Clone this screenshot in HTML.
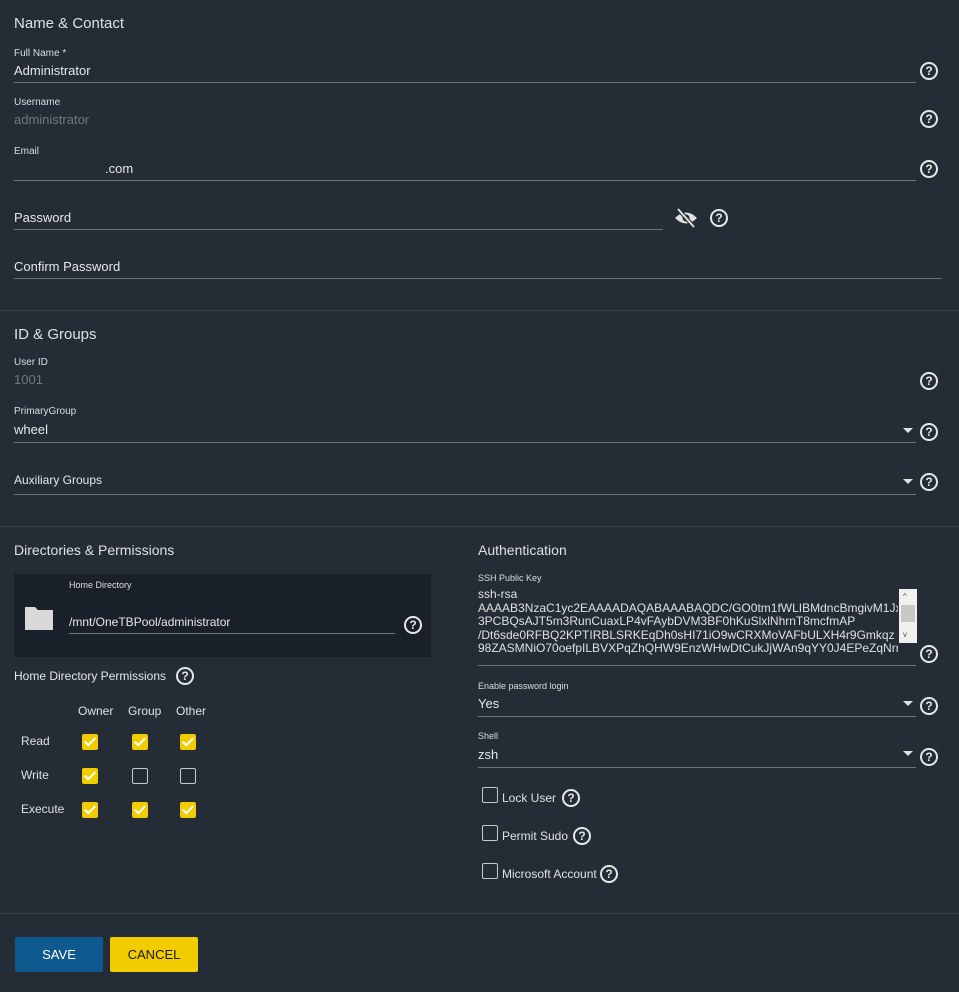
<!DOCTYPE html>
<html><head><meta charset="utf-8"><style>
body{margin:0;width:959px;height:992px;background:#242d36;font-family:"Liberation Sans",sans-serif;color:#e6e6e6;position:relative;overflow:hidden}
.a{position:absolute;white-space:nowrap}
.t{font-size:15px;color:#e0e0e0}
.lb{font-size:10px;color:#dcdcdc}
.v{font-size:13px;color:#e6e6e6}
.dim{color:#6f7780}
.ln{position:absolute;height:1px;background:#6b737b}
.sep{position:absolute;left:0;width:959px;height:1px;background:#36404a}
.h{position:absolute;width:14px;height:14px;border:2px solid #e6e6e6;border-radius:50%;font-size:12px;font-weight:bold;line-height:14px;text-align:center;color:#e6e6e6}
.arr{position:absolute;width:0;height:0;border-left:5px solid transparent;border-right:5px solid transparent;border-top:5px solid #e0e0e0}
.cb{position:absolute;width:14px;height:14px;border:1px solid #c8c8c8;border-radius:2px}
.ck{position:absolute;width:16px;height:16px;background:#f0cc00;border-radius:2px}
.ck:after{content:"";position:absolute;left:5px;top:1px;width:4px;height:9px;border:solid #fff;border-width:0 2px 2px 0;transform:rotate(45deg)}
.sm{font-size:12px;color:#e0e0e0}
</style></head><body>
<div class="a t" style="left:14px;top:15px">Name &amp; Contact</div>
<div class="a lb" style="left:14px;top:48px">Full Name *</div>
<div class="a v" style="left:14px;top:63px">Administrator</div>
<div class="ln" style="left:14px;top:82px;width:902px"></div>
<div class="h" style="left:920px;top:62px">?</div>
<div class="a lb" style="left:14px;top:97px">Username</div>
<div class="a v dim" style="left:14px;top:112px">administrator</div>
<div class="h" style="left:920px;top:110px">?</div>
<div class="a lb" style="left:14px;top:146px">Email</div>
<div class="a v" style="left:105px;top:161px">.com</div>
<div class="ln" style="left:14px;top:180px;width:902px"></div>
<div class="h" style="left:920px;top:160px">?</div>
<div class="a v" style="left:14px;top:210px">Password</div>
<div class="ln" style="left:14px;top:229px;width:649px"></div>
<svg class="a" style="left:674px;top:207px" width="24" height="22" viewBox="0 0 24 22"><path d="M1 11 Q12 0 23 11 Q12 22 1 11Z" fill="#e0e0e0"/><circle cx="12" cy="11" r="3.5" fill="#242d36"/><path d="M4 2 L20 20" stroke="#242d36" stroke-width="4"/><path d="M4 2 L20 20" stroke="#e0e0e0" stroke-width="2"/></svg>
<div class="h" style="left:710px;top:209px">?</div>
<div class="a v" style="left:14px;top:259px">Confirm Password</div>
<div class="ln" style="left:14px;top:278px;width:928px"></div>
<div class="sep" style="top:310px"></div>
<div class="a t" style="left:14px;top:326px">ID &amp; Groups</div>
<div class="a lb" style="left:14px;top:357px">User ID</div>
<div class="a v dim" style="left:14px;top:372px">1001</div>
<div class="h" style="left:920px;top:372px">?</div>
<div class="a lb" style="left:14px;top:406px">PrimaryGroup</div>
<div class="a v" style="left:14px;top:422px">wheel</div>
<div class="ln" style="left:14px;top:442px;width:902px"></div>
<div class="arr" style="left:903px;top:428px"></div>
<div class="h" style="left:920px;top:423px">?</div>
<div class="a v" style="left:14px;top:473px;font-size:12px">Auxiliary Groups</div>
<div class="ln" style="left:14px;top:494px;width:902px"></div>
<div class="arr" style="left:903px;top:479px"></div>
<div class="h" style="left:920px;top:473px">?</div>
<div class="sep" style="top:526px"></div>
<div class="a t" style="left:14px;top:542px;font-size:14px">Directories &amp; Permissions</div>
<div class="a t" style="left:478px;top:542px;font-size:14px">Authentication</div>
<div class="a" style="left:14px;top:574px;width:417px;height:83px;background:#1a2029"></div>
<svg class="a" style="left:23px;top:605px" width="32" height="27" viewBox="0 0 32 27"><path d="M2 2 H12 L15 5 H30 V25 H2Z" fill="#d8d8d8" rx="2"/></svg>
<div class="a lb" style="left:69px;top:580px;font-size:9px">Home Directory</div>
<div class="a v" style="left:69px;top:615px;font-size:12px">/mnt/OneTBPool/administrator</div>
<div class="ln" style="left:69px;top:633px;width:326px"></div>
<div class="h" style="left:404px;top:616px">?</div>
<div class="a v" style="left:14px;top:669px;font-size:12px">Home Directory Permissions</div>
<div class="h" style="left:176px;top:667px">?</div>
<div class="a sm" style="left:78px;top:704px">Owner</div>
<div class="a sm" style="left:128px;top:704px">Group</div>
<div class="a sm" style="left:176px;top:704px">Other</div>
<div class="a sm" style="left:21px;top:734px">Read</div>
<div class="a sm" style="left:21px;top:768px">Write</div>
<div class="a sm" style="left:21px;top:802px">Execute</div>
<div class="ck" style="left:82px;top:734px"></div><div class="ck" style="left:132px;top:734px"></div><div class="ck" style="left:180px;top:734px"></div>
<div class="ck" style="left:82px;top:768px"></div><div class="cb" style="left:132px;top:768px"></div><div class="cb" style="left:180px;top:768px"></div>
<div class="ck" style="left:82px;top:802px"></div><div class="ck" style="left:132px;top:802px"></div><div class="ck" style="left:180px;top:802px"></div>
<div class="a lb" style="left:478px;top:573px;font-size:9px">SSH Public Key</div>
<div class="a" style="left:478px;top:588px;width:420px;height:74px;overflow:hidden;font-size:12px;line-height:13.6px;color:#e0e0e0;white-space:pre">ssh-rsa
AAAAB3NzaC1yc2EAAAADAQABAAABAQDC/GO0tm1fWLIBMdncBmgivM1JxlH
3PCBQsAJT5m3RunCuaxLP4vFAybDVM3BF0hKuSlxlNhrnT8mcfmAP
/Dt6sde0RFBQ2KPTIRBLSRKEqDh0sHI71iO9wCRXMoVAFbULXH4r9Gmkqz
98ZASMNiO70oefpILBVXPqZhQHW9EnzWHwDtCukJjWAn9qYY0J4EPeZqNrr</div>
<div class="a" style="left:899px;top:589px;width:18px;height:54px;background:#f0f0f0"></div>
<div class="a" style="left:901px;top:605px;width:14px;height:17px;background:#c8c8c8"></div>
<div class="a" style="left:903px;top:592px;font-size:8px;color:#555">^</div>
<div class="a" style="left:903px;top:630px;font-size:8px;color:#555">v</div>
<div class="ln" style="left:478px;top:665px;width:438px"></div>
<div class="h" style="left:920px;top:645px">?</div>
<div class="a lb" style="left:478px;top:681px;font-size:9px">Enable password login</div>
<div class="a v" style="left:478px;top:696px">Yes</div>
<div class="ln" style="left:478px;top:716px;width:438px"></div>
<div class="arr" style="left:903px;top:701px"></div>
<div class="h" style="left:920px;top:697px">?</div>
<div class="a lb" style="left:478px;top:731px;font-size:9px">Shell</div>
<div class="a v" style="left:478px;top:747px">zsh</div>
<div class="ln" style="left:478px;top:767px;width:438px"></div>
<div class="arr" style="left:903px;top:751px"></div>
<div class="h" style="left:920px;top:748px">?</div>
<div class="cb" style="left:482px;top:787px"></div><div class="a sm" style="left:502px;top:791px">Lock User</div><div class="h" style="left:562px;top:789px">?</div>
<div class="cb" style="left:482px;top:825px"></div><div class="a sm" style="left:502px;top:829px">Permit Sudo</div><div class="h" style="left:573px;top:827px">?</div>
<div class="cb" style="left:482px;top:863px"></div><div class="a sm" style="left:502px;top:867px">Microsoft Account</div><div class="h" style="left:600px;top:865px">?</div>
<div class="sep" style="top:913px"></div>
<div class="a" style="left:15px;top:937px;width:88px;height:35px;background:#0e5a8f;border-radius:2px;color:#fff;font-size:13px;text-align:center;line-height:35px">SAVE</div>
<div class="a" style="left:110px;top:937px;width:88px;height:35px;background:#f0cc00;border-radius:2px;color:#1a1a1a;font-size:13px;text-align:center;line-height:35px">CANCEL</div>
</body></html>
